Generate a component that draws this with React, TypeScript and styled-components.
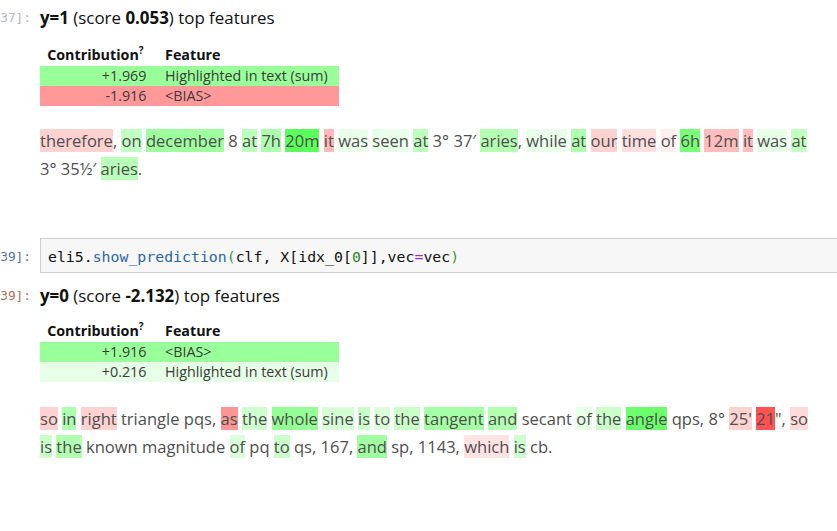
import React from 'react';
import styled, { createGlobalStyle } from 'styled-components';

const GlobalStyle = createGlobalStyle`
  html, body {
    margin: 0;
    padding: 0;
    background: #fff;
  }
  body {
    font-family: "Open Sans", "Noto Sans", sans-serif;
    color: #000;
    overflow: hidden;
  }
`;

const Notebook = styled.div`
  padding-top: 7px;
  width: 837px;
  overflow: hidden;
`;

const CellRow = styled.div<{ $top?: number }>`
  display: flex;
  align-items: flex-start;
  margin-top: ${p => p.$top || 0}px;
`;

const Prompt = styled.div<{ $color: string; $pt: number }>`
  flex: 0 0 31px;
  width: 31px;
  margin-right: 9px;
  padding-top: ${p => p.$pt}px;
  text-align: right;
  white-space: nowrap;
  font-family: "DejaVu Sans Mono", "Liberation Mono", monospace;
  font-size: 12.8px;
  line-height: 22px;
  color: ${p => p.$color};
`;

const OutputBody = styled.div`
  flex: 1;
  min-width: 0;
`;

const Title = styled.div`
  font-size: 16.9px;
  line-height: 22px;
  color: #111;
  white-space: nowrap;
  b {
    font-weight: 700;
  }
`;

const Table = styled.table<{ $top: number }>`
  border-collapse: collapse;
  margin-top: ${p => p.$top}px;
  font-size: 14.3px;
  width: 299px;
`;

const HeadCell = styled.th<{ $align: string }>`
  text-align: ${p => p.$align};
  font-weight: 700;
  color: #111;
  padding: 0 1em 2px 0.5em;
  height: 21px;
  line-height: 19px;
  vertical-align: bottom;
  white-space: nowrap;
  sup {
    font-size: 10px;
    vertical-align: 6px;
    line-height: 0;
  }
`;

const Row = styled.tr<{ $bg: string }>`
  background: ${p => p.$bg};
`;

const Cell = styled.td<{ $align: string }>`
  text-align: ${p => p.$align};
  padding: 0 0.8em 0 0.5em;
  height: 20px;
  line-height: 20px;
  color: #3a3a3a;
  white-space: nowrap;
`;

const Passage = styled.div<{ $top: number }>`
  margin-top: ${p => p.$top}px;
  font-size: 16.55px;
  line-height: 28px;
  color: #222;
`;

const Line = styled.div`
  white-space: nowrap;
`;

const Token = styled.span<{ $bg?: string }>`
  background-color: ${p => p.$bg || 'transparent'};
  opacity: 0.8;
`;

const CodeBox = styled.div`
  flex: 1;
  background: #f7f7f7;
  border: 1px solid #cfcfcf;
  border-right: none;
  padding: 6px 7px 2px 7px;
  font-family: "DejaVu Sans Mono", "Liberation Mono", monospace;
  font-size: 14.85px;
  line-height: 25px;
  color: #111;
  white-space: nowrap;
`;

const Code = styled.span<{ $c: string }>`
  color: ${p => p.$c};
`;

type Tok = [string, string?];

// [text, background]; no background = plain text
const g = (l: number) => `hsl(120, 100%, ${l}%)`;
const r = (l: number) => `hsl(0, 100%, ${l}%)`;

const passage1: Tok[][] = [
  [
    ['therefore', r(89)], [', '], ['on', g(85)], [' '], ['december', g(76)], [' 8 '], ['at', g(84)], [' '],
    ['7h', g(80)], [' '], ['20m', g(60)], [' '], ['it', r(83)], [' '], ['was', g(95)], [' '], ['seen', g(95)], [' '],
    ['at', g(84)], [' 3° 37′ '], ['aries', g(82)], [', '], ['while', g(95)], [' '], ['at', g(80)], [' '],
    ['our', r(89)], [' '], ['time', r(92)], [' '], ['of', r(96)], [' '], ['6h', g(67)], [' '], ['12m', r(84)], [' '],
    ['it', r(84)], [' '], ['was', g(94)], [' '], ['at', g(85)],
  ],
  [['3° 35½′ '], ['aries', g(83)], ['.']],
];

const passage2: Tok[][] = [
  [
    ['so', r(89)], [' '], ['in', g(80)], [' '], ['right', r(89)], [' triangle pqs, '], ['as', r(74)], [' '],
    ['the', g(88)], [' '], ['whole', g(74)], [' '], ['sine', g(90)], [' '], ['is', g(87)], [' '], ['to', g(91)], [' '],
    ['the', g(87)], [' '], ['tangent', g(78)], [' '], ['and', g(81)], [' secant '], ['of', g(94)], [' '],
    ['the', g(87)], [' '], ['angle', g(64)], [' qps, 8° '], ['25\'', r(89)], [' '], ['21', r(58)], ['", '], ['so', r(91)],
  ],
  [
    ['is', g(87)], [' '], ['the', g(81)], [' known magnitude '], ['of', g(91)], [' pq '], ['to', g(87)],
    [' qs, 167, '], ['and', g(77)], [' sp, 1143, '], ['which', r(93)], [' '], ['is', g(88)], [' cb.'],
  ],
];

function Highlighted({ lines, top }: { lines: Tok[][]; top: number }) {
  return (
    <Passage $top={top}>
      {lines.map((line, i) => (
        <Line key={i}>
          {line.map(([text, bg], j) => (
            <Token key={j} $bg={bg}>{text}</Token>
          ))}
        </Line>
      ))}
    </Passage>
  );
}

type Weight = { value: string; feature: string; bg: string };

function WeightTable({ rows, top }: { rows: Weight[]; top: number }) {
  return (
    <Table $top={top}>
      <thead>
        <tr>
          <HeadCell $align="right">Contribution<sup>?</sup></HeadCell>
          <HeadCell $align="left">Feature</HeadCell>
        </tr>
      </thead>
      <tbody>
        {rows.map(w => (
          <Row key={w.feature} $bg={w.bg}>
            <Cell $align="right">{w.value}</Cell>
            <Cell $align="left">{w.feature}</Cell>
          </Row>
        ))}
      </tbody>
    </Table>
  );
}

export default function App() {
  return (
    <>
      <GlobalStyle />
      <Notebook>
        <CellRow>
          <Prompt $color="#b3b6c4" $pt={0}>37]:</Prompt>
          <OutputBody>
            <Title><b>y=1</b> (score <b>0.053</b>) top features</Title>
            <WeightTable
              top={14}
              rows={[
                { value: '+1.969', feature: 'Highlighted in text (sum)', bg: g(80) },
                { value: '-1.916', feature: '<BIAS>', bg: r(80) },
              ]}
            />
            <Highlighted top={21} lines={passage1} />
          </OutputBody>
        </CellRow>

        <CellRow $top={55}>
          <Prompt $color="#55709e" $pt={8}>39]:</Prompt>
          <CodeBox>
            <Code $c="#111">eli5.</Code>
            <Code $c="#2a65a8">show_prediction</Code>
            <Code $c="#3c9a3c">(</Code>
            <Code $c="#111">clf, X[idx_0[</Code>
            <Code $c="#1e8a1e">0</Code>
            <Code $c="#111">]],vec</Code>
            <Code $c="#a626c8">=</Code>
            <Code $c="#111">vec</Code>
            <Code $c="#3c9a3c">)</Code>
          </CodeBox>
        </CellRow>

        <CellRow $top={12}>
          <Prompt $color="#b36c5c" $pt={0}>39]:</Prompt>
          <OutputBody>
            <Title><b>y=0</b> (score <b>-2.132</b>) top features</Title>
            <WeightTable
              top={12}
              rows={[
                { value: '+1.916', feature: '<BIAS>', bg: g(80) },
                { value: '+0.216', feature: 'Highlighted in text (sum)', bg: g(95) },
              ]}
            />
            <Highlighted top={23} lines={passage2} />
          </OutputBody>
        </CellRow>
      </Notebook>
    </>
  );
}
